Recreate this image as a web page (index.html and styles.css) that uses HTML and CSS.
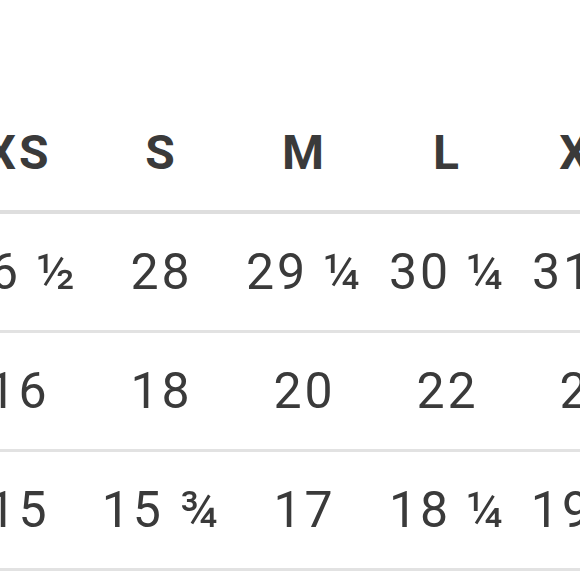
FILE: index.html
```html
<!DOCTYPE html>
<html>
<head>
<meta charset="utf-8">
<link rel="stylesheet" href="styles.css">
</head>
<body>
<div class="viewport">
  <table class="chart">
    <thead>
      <tr><th>XS</th><th>S</th><th>M</th><th>L</th><th>XL</th></tr>
    </thead>
    <tbody>
      <tr><td>26 ½</td><td>28</td><td>29 ¼</td><td>30 ¼</td><td>31 ¼</td></tr>
      <tr><td>16</td><td>18</td><td>20</td><td>22</td><td>24</td></tr>
      <tr><td>15</td><td>15 ¾</td><td>17</td><td>18 ¼</td><td>19 ½</td></tr>
    </tbody>
  </table>
</div>
</body>
</html>
```
FILE: styles.css
```css
html, body {
  margin: 0;
  padding: 0;
  background: #ffffff;
}
.viewport {
  width: 580px;
  height: 580px;
  overflow: hidden;
  padding-top: 95px;
  box-sizing: border-box;
}
.chart {
  border-collapse: collapse;
  margin-left: -53px;
  table-layout: fixed;
  font-family: Roboto, "Noto Sans", sans-serif;
  color: #3a3a3a;
  letter-spacing: 3px;
}
.chart th, .chart td {
  width: 143px;
  min-width: 143px;
  max-width: 143px;
  padding: 0;
  text-align: center;
  vertical-align: middle;
  white-space: nowrap;
}
.chart th {
  height: 115px;
  font-size: 48px;
  font-weight: 700;
  border-bottom: 4px solid #dedede;
}
.chart td {
  height: 116px;
  font-size: 50px;
  font-weight: 400;
  border-bottom: 3px solid #e2e2e2;
}
```
